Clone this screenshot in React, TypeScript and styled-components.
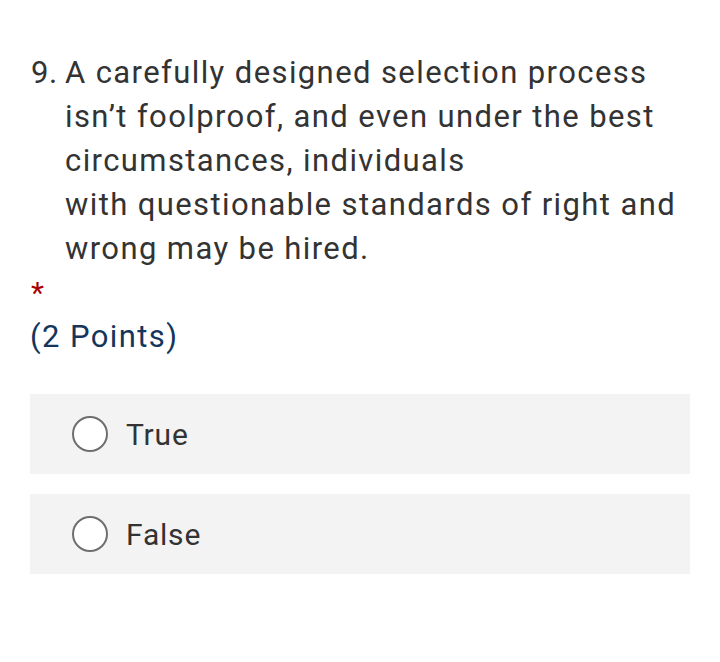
import styled, { createGlobalStyle } from "styled-components"

const GlobalStyle = createGlobalStyle`
  html, body {
    margin: 0;
    padding: 0;
    background: #ffffff;
  }
  body {
    font-family: Roboto, "Noto Sans", "Liberation Sans", sans-serif;
    color: #333333;
  }
`

// #region styled
const Page = styled.main`
  padding: 51px 30px 0 30px;
  width: 720px;
  box-sizing: border-box;
`

const Title = styled.div`
  display: flex;
  font-size: 31px;
  line-height: 44px;
  letter-spacing: 1.4px;
`

const Number = styled.span`
  flex: 0 0 auto;
  width: 34px;
  margin-left: 1px;
  letter-spacing: 0.5px;
`

const Question = styled.span`
  flex: 1 1 auto;
`

const Required = styled.div`
  color: #a80000;
  font-size: 30px;
  line-height: 44px;
  padding-left: 1px;
`

const Points = styled.div`
  color: #14365c;
  font-size: 31px;
  line-height: 44px;
  letter-spacing: 1.4px;
`

const Options = styled.div`
  display: flex;
  flex-direction: column;
  gap: 20px;
  margin-top: 35px;
  width: 660px;
`

const Option = styled.label`
  display: flex;
  align-items: center;
  gap: 18px;
  height: 80px;
  padding-left: 42px;
  background: #f3f3f3;
  font-size: 30px;
  letter-spacing: 0.8px;
  cursor: pointer;
`

const Radio = styled.span`
  width: 36px;
  height: 36px;
  border-radius: 50%;
  border: 2px solid #6e6e6e;
  background: #ffffff;
  box-sizing: border-box;
  flex: 0 0 auto;
`
// #endregion

const App = () => {
  return (
    <Page>
      <GlobalStyle />
      <Title>
        <Number>9.</Number>
        <Question>
          A carefully designed selection process isn’t foolproof, and even under the best circumstances, individuals
          <br />
          with questionable standards of right and wrong may be hired.
        </Question>
      </Title>
      <Required>*</Required>
      <Points>(2 Points)</Points>

      <Options>
        <Option>
          <Radio />
          True
        </Option>
        <Option>
          <Radio />
          False
        </Option>
      </Options>
    </Page>
  )
}

export default App
